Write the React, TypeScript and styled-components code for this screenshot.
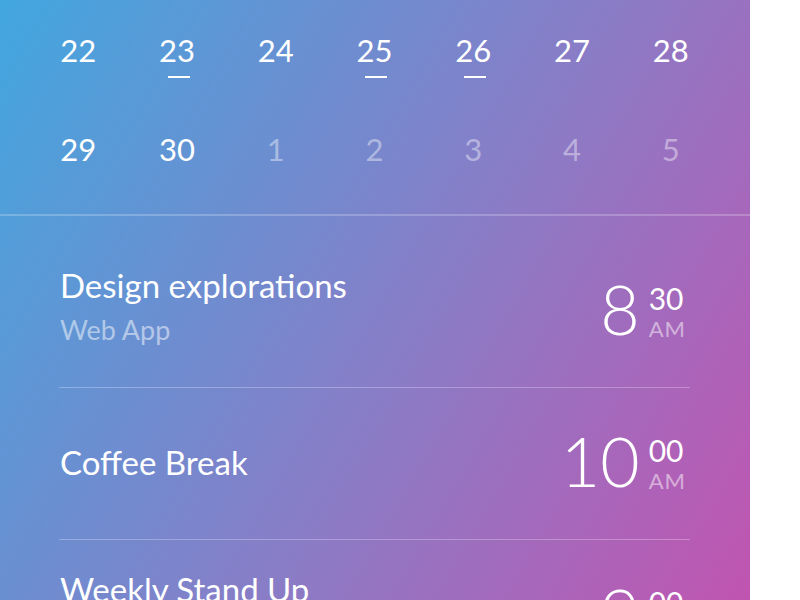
import React from "react";
import styled, { createGlobalStyle } from "styled-components";

const GlobalStyle = createGlobalStyle`
  html, body {
    margin: 0;
    padding: 0;
    background: #ffffff;
    overflow: hidden;
  }
  body {
    font-family: "Lato", "Open Sans", sans-serif;
    -webkit-font-smoothing: antialiased;
  }
`;

const Page = styled.div`
  width: 800px;
  height: 600px;
  display: flex;
  background: #ffffff;
  overflow: hidden;
`;

const Panel = styled.div`
  width: 750px;
  min-height: 760px;
  background: linear-gradient(120deg, #42a7df 0%, #8a7cc6 52%, #cb4dac 100%);
  color: #ffffff;
  display: flex;
  flex-direction: column;
`;

const Calendar = styled.div`
  display: grid;
  grid-template-columns: repeat(7, 1fr);
  grid-auto-rows: 99px;
  padding: 0 30px 16px 29px;
  border-bottom: 2px solid rgba(255, 255, 255, 0.22);
`;

const Day = styled.div<{ $muted?: boolean; $marked?: boolean }>`
  position: relative;
  display: flex;
  align-items: center;
  justify-content: center;
  font-size: 31px;
  font-weight: 400;
  color: ${(p) => (p.$muted ? "rgba(255, 255, 255, 0.42)" : "#ffffff")};

  &::after {
    content: "";
    display: ${(p) => (p.$marked ? "block" : "none")};
    position: absolute;
    left: 50%;
    top: 76px;
    width: 22px;
    height: 2px;
    margin-left: -9px;
    background: #ffffff;
  }
`;

const Events = styled.div`
  padding: 20px 60px 0 59px;
  display: flex;
  flex-direction: column;
`;

const EventRow = styled.div`
  height: 151px;
  display: flex;
  align-items: center;
  justify-content: space-between;
  border-bottom: 1px solid rgba(255, 255, 255, 0.28);
`;

const EventInfo = styled.div<{ $withSub?: boolean }>`
  display: flex;
  flex-direction: column;
  padding-left: 1px;
  padding-bottom: ${(p) => (p.$withSub ? "12px" : "4px")};
`;

const Title = styled.div`
  font-size: 33px;
  line-height: 40px;
  font-weight: 400;
`;

const Subtitle = styled.div`
  margin-top: 8px;
  font-size: 27px;
  line-height: 34px;
  color: rgba(255, 255, 255, 0.5);
`;

const Time = styled.div`
  display: flex;
  align-items: flex-end;
  gap: 9px;
  padding-right: 4px;
  margin-bottom: 6px;
`;

const Hour = styled.div`
  font-size: 68px;
  line-height: 56px;
  font-weight: 300;
`;

const TimeSide = styled.div`
  display: flex;
  flex-direction: column;
  align-items: flex-start;
  margin-bottom: -3px;
`;

const Minutes = styled.div`
  font-size: 30px;
  line-height: 30px;
  margin-bottom: 5px;
`;

const Meridiem = styled.div`
  font-size: 22px;
  line-height: 22px;
  letter-spacing: 1px;
  color: rgba(255, 255, 255, 0.5);
`;

const days = [
  { n: 22 },
  { n: 23, marked: true },
  { n: 24 },
  { n: 25, marked: true },
  { n: 26, marked: true },
  { n: 27 },
  { n: 28 },
  { n: 29 },
  { n: 30 },
  { n: 1, muted: true },
  { n: 2, muted: true },
  { n: 3, muted: true },
  { n: 4, muted: true },
  { n: 5, muted: true },
];

const events = [
  { title: "Design explorations", sub: "Web App", hour: "8", min: "30", ampm: "AM" },
  { title: "Coffee Break", hour: "10", min: "00", ampm: "AM" },
  { title: "Weekly Stand Up", sub: "Product Team", hour: "9", min: "00", ampm: "AM" },
];

const App: React.FC = () => {
  return (
    <>
      <GlobalStyle />
      <Page>
        <Panel>
          <Calendar>
            {days.map((d, i) => (
              <Day key={i} $muted={d.muted} $marked={d.marked}>
                {d.n}
              </Day>
            ))}
          </Calendar>
          <Events>
            {events.map((e, i) => (
              <EventRow key={i}>
                <EventInfo $withSub={!!e.sub}>
                  <Title>{e.title}</Title>
                  {e.sub && <Subtitle>{e.sub}</Subtitle>}
                </EventInfo>
                <Time>
                  <Hour>{e.hour}</Hour>
                  <TimeSide>
                    <Minutes>{e.min}</Minutes>
                    <Meridiem>{e.ampm}</Meridiem>
                  </TimeSide>
                </Time>
              </EventRow>
            ))}
          </Events>
        </Panel>
      </Page>
    </>
  );
};

export default App;
